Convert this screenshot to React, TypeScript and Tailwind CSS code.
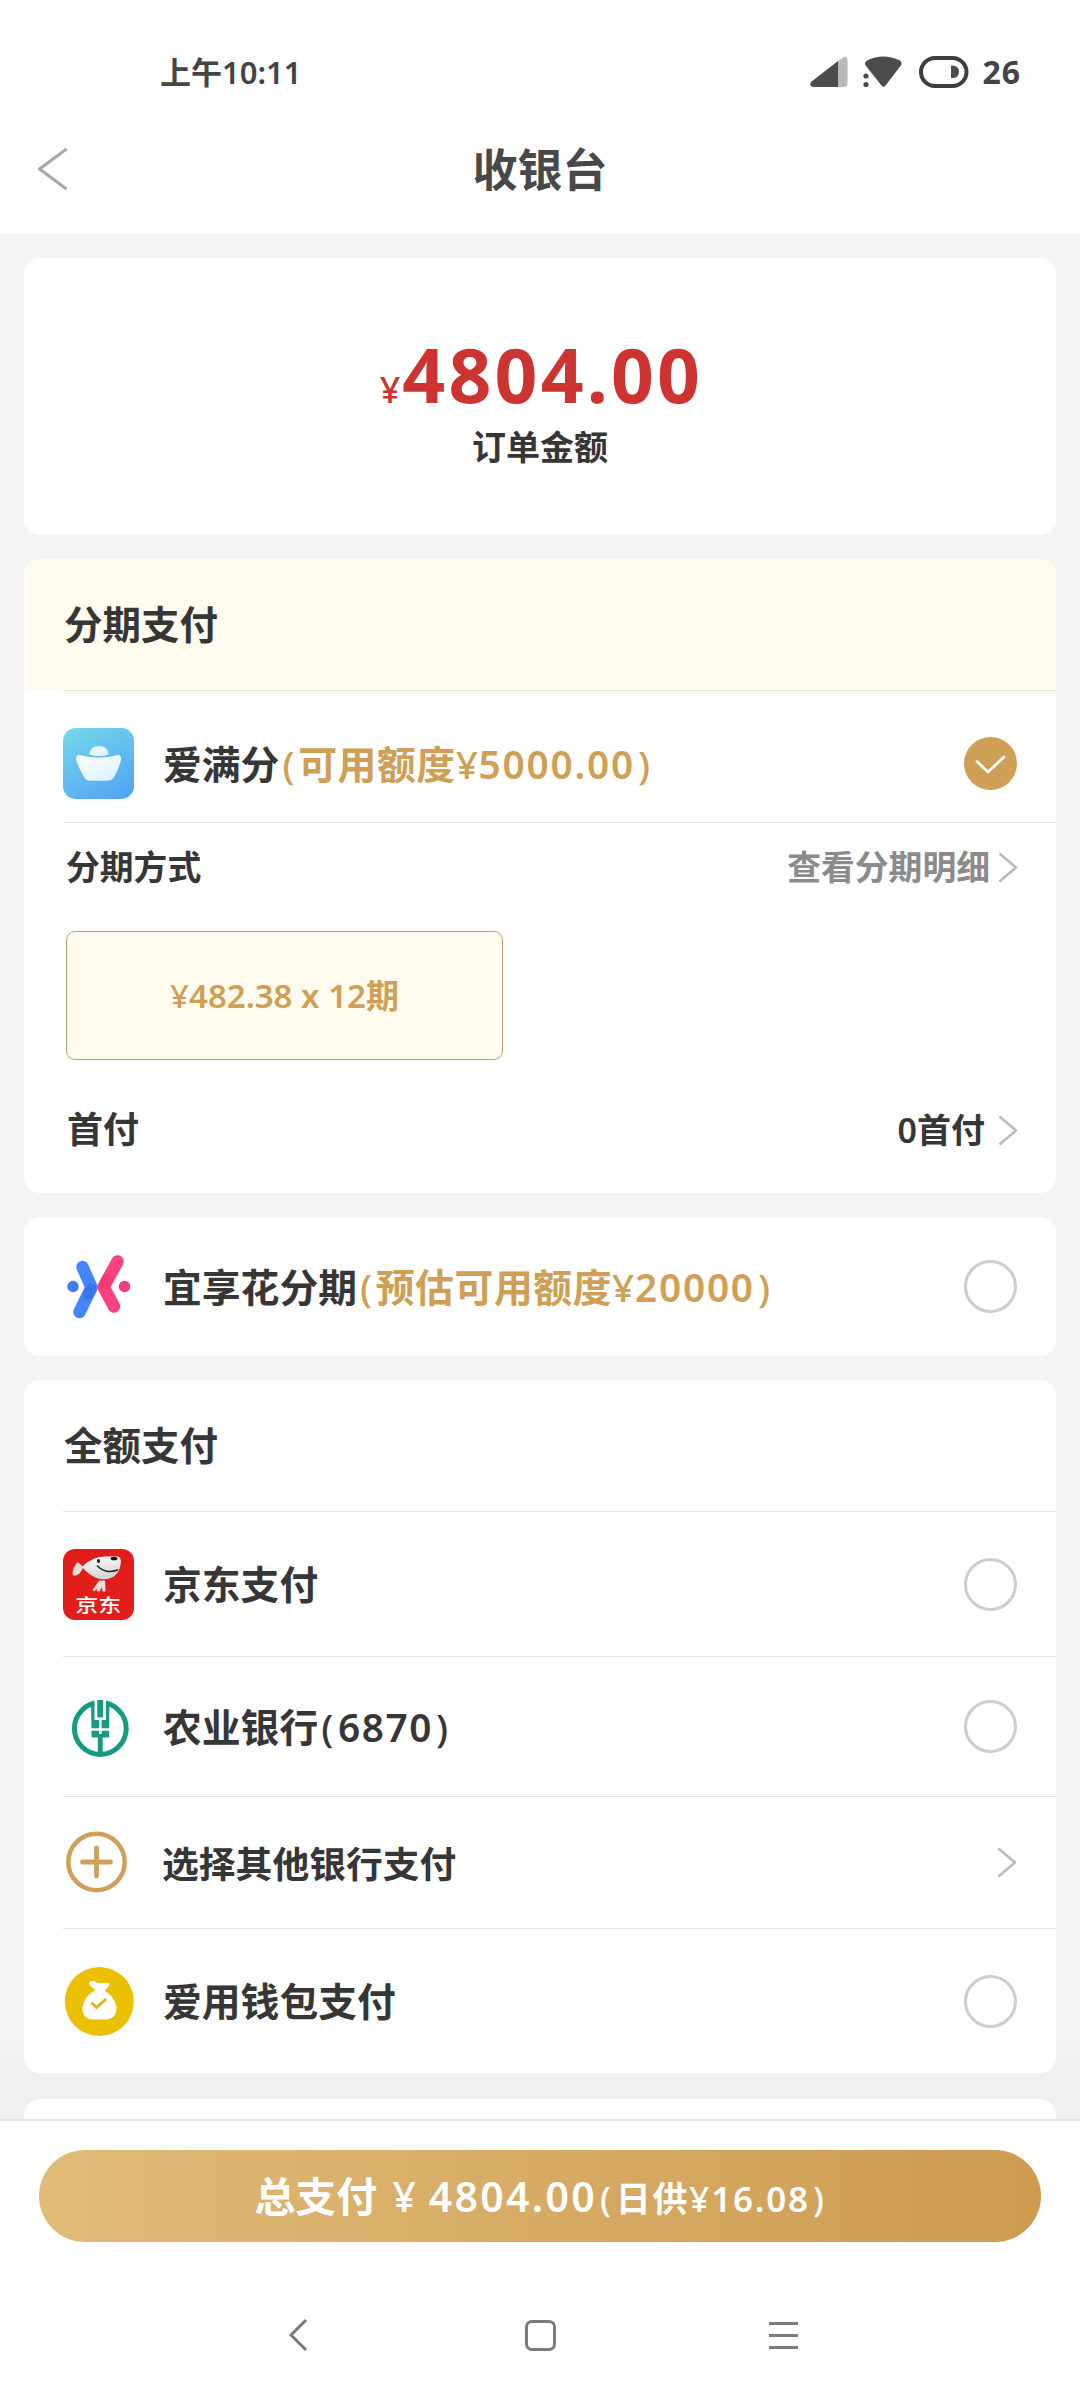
import type { ReactNode } from "react";

function Chevron() {
  return (
    <svg width="20" height="31" viewBox="0 0 20 31" fill="none" className="shrink-0">
      <path d="M1.500 1.500 L18 15.500 L1.500 29.500" stroke="#bababa" strokeWidth="2.500" strokeLinejoin="round" />
    </svg>
  );
}

function Radio({ checked = false }: { checked?: boolean }) {
  if (checked) {
    return (
      <svg width="53" height="53" viewBox="0 0 53 53" fill="none" className="shrink-0">
        <circle cx="26.500" cy="26.500" r="26.500" fill="#cf9f55" />
        <path d="M13 24.500 L24 35 L40 20" stroke="#fff" strokeWidth="2.800" strokeLinecap="round" strokeLinejoin="round" />
      </svg>
    );
  }
  return <div className="size-[53px] shrink-0 rounded-full border-[3px] border-[#cdcdcd]" />;
}

function Divider() {
  return <div className="ml-[39px] h-px bg-[#e3e3e0]" />;
}

function Yen() {
  return <span className="font-medium">¥</span>;
}

// Brackets sit a little away from their content
function Paren({ children }: { children: ReactNode }) {
  return (
    <>
      <span className="mr-[3px] ml-[3px] font-medium">(</span>
      {children}
      <span className="ml-[3px] font-medium">)</span>
    </>
  );
}

function IngotIcon() {
  return (
    <svg width="71" height="71" viewBox="0 0 71 71">
      <defs>
        <linearGradient id="sky" x1="0.2" y1="0" x2="0.8" y2="1">
          <stop offset="0" stopColor="#72d5e8" />
          <stop offset="1" stopColor="#51a6f5" />
        </linearGradient>
        <linearGradient id="ingot" x1="0" y1="0" x2="1" y2="1">
          <stop offset="0" stopColor="#fff" />
          <stop offset="1" stopColor="#d9f0fd" />
        </linearGradient>
      </defs>
      <rect width="71" height="71" rx="13" fill="url(#sky)" />
      <path d="M26.500 26.500 Q27 18 36 18 Q45 18 45.500 26.500 Q36 29.500 26.500 26.500Z" fill="#e4f6fc" />
      <path
        d="M16 27 Q36 32.500 55 27 Q58.500 27 58 32 Q56 41 51 49 Q49 52.800 44 52.800 H27.500 Q23 52.800 21 49 Q15.500 40 13.200 31.500 Q12.700 27 16 27Z"
        fill="url(#ingot)"
      />
    </svg>
  );
}

function YixiangIcon() {
  return (
    <svg width="71" height="71" viewBox="0 0 71 71" fill="none">
      <g strokeLinecap="round" strokeLinejoin="round">
        <path d="M19.500 16 L28.500 36.500 L16.500 61" stroke="#4486fa" strokeWidth="12.500" />
        <path d="M28 38 L25.500 43" stroke="#3876e8" strokeWidth="11" />
        <path d="M54.500 10.500 L40.500 36 L51 55.500" stroke="#fc427f" strokeWidth="12.500" />
        <path d="M42 33 L44.500 28" stroke="#ef3a7b" strokeWidth="11" />
      </g>
      <circle cx="10" cy="35.500" r="5.700" fill="#3f7df0" />
      <circle cx="61.500" cy="35.500" r="5.700" fill="#f13c7b" />
    </svg>
  );
}

function JdIcon() {
  return (
    <svg width="71" height="71" viewBox="0 0 71 71">
      <defs>
        <linearGradient id="joy" x1="0" y1="0" x2="0.300" y2="1">
          <stop offset="0" stopColor="#fff" />
          <stop offset="1" stopColor="#d5d5d5" />
        </linearGradient>
      </defs>
      <rect width="71" height="71" rx="12" fill="#e31d1a" />
      <path d="M20 18 Q15 12 13.500 14 Q9.500 20 9.500 25 Q10 27.500 13 26.500 Q17 25 19.500 20Z" fill="#dedede" />
      <path d="M19 18 Q28 8 42 7.500 L55 7.500 Q59 9 57.500 16 Q56 24 50 28 Q43 31.500 35 29.500 Q26 26.500 19 18Z" fill="url(#joy)" />
      <path d="M34.500 17 Q43 25.500 54.500 21" fill="none" stroke="#222" strokeWidth="1.500" strokeLinecap="round" />
      <ellipse cx="35.500" cy="12" rx="1.600" ry="1.900" fill="#222" />
      <ellipse cx="51" cy="9.500" rx="3.500" ry="1.800" fill="#111" />
      <path d="M36 31.500 L42 31.500 L42.500 42.500 L39.500 42.500 L38.800 38 L36.500 42.500 L33.500 42 L34.500 39.500 L31 42.500 L29.500 41Z" fill="#f4dcdc" />
      <text
        x="35.300"
        y="78.500"
        transform="scale(1 0.8)"
        textAnchor="middle"
        fontSize="23"
        fill="#fff"
        fontFamily="'Noto Sans CJK SC', sans-serif"
        fontWeight="500"
      >
        京东
      </text>
    </svg>
  );
}

function AbcIcon() {
  return (
    <svg width="71" height="71" viewBox="0 0 71 71" fill="none">
      <circle cx="37.300" cy="37.500" r="25.900" stroke="#179a80" strokeWidth="5" />
      <path d="M31.400 6 H43 V20 H31.400Z" fill="#fff" />
      <g fill="#179a80">
        <path d="M28 11 H31.500 V29 H36 V37.300 H28.500Z" />
        <path d="M46.500 11 H43 V29 H38.600 V37.300 H46Z" />
        <path d="M34.300 9 H40.200 V26.500 H34.300Z" />
        <path d="M28.500 39.800 H36 V43 H38.600 V39.800 H46 V46.500 H39.700 V63 H34.800 V46.500 H28.500Z" />
      </g>
    </svg>
  );
}

function PlusIcon() {
  return (
    <svg width="71" height="71" viewBox="0 0 71 71" fill="none" stroke="#cfa05a" strokeLinecap="round">
      <circle cx="33.500" cy="35" r="28.200" strokeWidth="4.500" />
      <path d="M19.500 35 H47.500 M33.500 21 V49" strokeWidth="4.800" />
    </svg>
  );
}

function WalletIcon() {
  return (
    <svg width="71" height="71" viewBox="0 0 71 71">
      <circle cx="36.300" cy="35.500" r="34.500" fill="#ebbf02" />
      <path
        d="M26 16.500 Q29.500 14 33 16 Q36.500 18 40 17 Q44 16.500 47 17.500 Q45 22 41.500 24.500 Q52 31 53.500 41 Q54 53 42 53.500 H30.500 Q18.500 53 19.500 41 Q21 31 31.500 24.500 L32 23 Q26.500 20.500 26 16.500Z"
        fill="#fff"
      />
      <path d="M28.500 36.500 L33.500 41.500 L43 33" fill="none" stroke="#dfb21a" strokeWidth="2.800" />
    </svg>
  );
}

type PayRowProps = {
  icon: ReactNode;
  className: string;
  right: ReactNode;
  children: ReactNode;
};

function PayRow({ icon, className, right, children }: PayRowProps) {
  return (
    <div className={`flex items-center pl-[39px] pr-[39px] ${className}`}>
      {icon}
      <div className="ml-[29px] flex-1 pt-px whitespace-nowrap text-[38.8px] leading-none">{children}</div>
      {right}
    </div>
  );
}

function StatusBar() {
  return (
    <div className="flex h-[144px] items-center justify-between pl-[160px] pr-[59px] text-[#444]">
      <span className="text-[31px] leading-none">上午10:11</span>
      <div className="flex items-center">
        <svg width="38" height="32" viewBox="0 0 38 32">
          <path d="M28 5 L34 1 Q37.500 0 37.500 4 V27 Q37.500 31 34 31 H28Z" fill="#b9b9b9" />
          <path d="M28 5 V31 H3 Q-1 30 1 26Z" fill="#4c4c4c" />
        </svg>
        <svg width="40" height="32" viewBox="0 0 40 32" className="ml-[15px]" fill="#4c4c4c">
          <path d="M3 10 Q0.500 7 4 4.500 Q20 -3.500 37 4.500 Q40 7 37.500 10 L22.500 29.500 Q20.500 32 18.500 29.500Z" />
          <circle cx="3" cy="20" r="2.600" />
          <circle cx="3" cy="28.500" r="2.600" />
        </svg>
        <svg width="50" height="32" viewBox="0 0 50 32" className="ml-[16px]" fill="none">
          <rect x="2" y="2" width="45.500" height="28" rx="14" stroke="#3e3e3e" strokeWidth="4" />
          <path d="M32 9.500 H34 Q40 10.500 40 15.700 Q40 21.500 34 22 H32Z" fill="#4c4c4c" />
        </svg>
        <span className="ml-[13px] text-[32px] leading-none font-bold tracking-[1px]">26</span>
      </div>
    </div>
  );
}

export default function App() {
  return (
    <div className="flex h-[2400px] w-[1080px] flex-col overflow-hidden bg-[#f4f4f4] font-['Noto_Sans','Noto_Sans_CJK_SC',sans-serif] font-semibold text-[#363636]">
      <header className="h-[234px] shrink-0 bg-[#fefefe]">
        <StatusBar />
        <div className="flex h-[50px] items-center justify-between px-[37px]">
          <svg width="31" height="44" viewBox="0 0 31 44" fill="none">
            <path d="M29.500 2 L2.500 22 L29.500 42" stroke="#a8a8a8" strokeWidth="2.900" strokeLinejoin="round" />
          </svg>
          <h1 className="text-[45px] leading-none font-bold text-[#484848]">收银台</h1>
          <div className="w-[31px]" />
        </div>
      </header>

      <main className="flex h-[1885px] shrink-0 flex-col overflow-hidden bg-linear-to-b from-[#f4f4f4] from-95% to-[#f0f0f0] to-98% px-6 pt-6">
        <section className="flex h-[277px] shrink-0 flex-col items-center rounded-[16px] bg-white pt-[79px]">
          <div className="flex items-baseline pl-[3px] leading-none text-[#cd3431]">
            <span className="mr-[2px] text-[36px] leading-none font-medium">¥</span>
            <span className="text-[75px] leading-[75px] font-bold tracking-[3.2px]">4804.00</span>
          </div>
          <div className="mt-[18px] text-[34px] leading-none">订单金额</div>
        </section>

        <section className="mt-6 h-[634px] shrink-0 overflow-hidden rounded-[16px] bg-white">
          <div className="flex h-[131px] items-center bg-[#fffbef] pl-[40px] text-[38.5px]">分期支付</div>
          <Divider />
          <PayRow className="h-[131px] pt-[14px]" icon={<IngotIcon />} right={<Radio checked />}>
            爱满分
            <span className="tracking-[0.6px] text-[#cf9f55]">
              <Paren>
                可用额度
                <Yen />
                <span className="tracking-[1.8px]">5000.00</span>
              </Paren>
            </span>
          </PayRow>
          <Divider />
          <div className="flex h-[89px] items-center justify-between pr-[38px] pl-[42px] text-[33.8px] leading-none">
            <span>分期方式</span>
            <div className="flex items-center gap-2 text-[#8b8b8b]">
              查看分期明细
              <Chevron />
            </div>
          </div>
          <div className="mt-[19px] ml-[42px] flex h-[129px] w-[437px] items-center justify-center rounded-[9px] border border-[#bfa377] bg-[#fffbef] text-[33px] leading-none text-[#cf9f55]">
            <span>
              <Yen />
              482.38 x 12期
            </span>
          </div>
          <div className="mt-[32px] flex h-[76px] items-center justify-between pr-[38px] pl-[43px] leading-none">
            <span className="text-[36px]">首付</span>
            <div className="flex items-center gap-[13px] text-[34px]">
              0首付
              <Chevron />
            </div>
          </div>
        </section>

        <section className="mt-6 h-[139px] shrink-0 rounded-[16px] bg-white">
          <PayRow className="h-[139px]" icon={<YixiangIcon />} right={<Radio />}>
            宜享花分期
            <span className="tracking-[0.6px] text-[#cf9f55]">
              <Paren>
                预估可用额度
                <Yen />
                <span className="tracking-[1.8px]">20000</span>
              </Paren>
            </span>
          </PayRow>
        </section>

        <section className="mt-6 h-[693px] shrink-0 rounded-[16px] bg-white">
          <div className="flex h-[131px] items-center pl-[40px] text-[38.5px]">全额支付</div>
          <Divider />
          <PayRow className="h-[144px]" icon={<JdIcon />} right={<Radio />}>
            京东支付
          </PayRow>
          <Divider />
          <PayRow className="h-[139px]" icon={<AbcIcon />} right={<Radio />}>
            农业银行
            <span className="tracking-[1.6px]">
              <Paren>6870</Paren>
            </span>
          </PayRow>
          <Divider />
          <PayRow className="h-[131px]" icon={<PlusIcon />} right={<Chevron />}>
            <span className="-ml-px text-[36.8px]">选择其他银行支付</span>
          </PayRow>
          <Divider />
          <PayRow className="h-[144px]" icon={<WalletIcon />} right={<Radio />}>
            爱用钱包支付
          </PayRow>
        </section>

        <section className="mt-[26px] h-[60px] shrink-0 rounded-t-[16px] bg-white" />
      </main>

      <footer className="flex h-[281px] shrink-0 flex-col items-center border-t-2 border-[#e4e4e4] bg-[#fefefe] pt-[29px]">
        <button className="flex h-[92px] w-[1002px] items-baseline justify-center rounded-full bg-linear-to-r from-[#e0bb78] to-[#cd9b50] text-[41px] leading-[92px] whitespace-pre text-white">
          总支付<span className="mr-[13px] ml-[15px] font-medium">¥</span>
          <span className="tracking-[2.3px]">4804.00</span>
          <span className="text-[35px] leading-[90px] tracking-[1.8px]">
            <Paren>
              日供
              <Yen />
              16.08
            </Paren>
          </span>
        </button>
        <div className="mt-[76px] flex h-[34px] w-full items-center pl-[287px]">
          <svg width="22" height="34" viewBox="0 0 22 34" fill="none">
            <path d="M19 2 L4 17 L19 32" stroke="#7b7b7b" strokeWidth="3" />
          </svg>
          <div className="ml-[216px] h-[31px] w-[31px] rounded-[7px] border-[3px] border-[#7b7b7b]" />
          <div className="ml-[213px] flex w-[29px] flex-col gap-[9px]">
            <div className="h-[3px] bg-[#7b7b7b]" />
            <div className="h-[3px] bg-[#7b7b7b]" />
            <div className="h-[3px] bg-[#7b7b7b]" />
          </div>
        </div>
      </footer>
    </div>
  );
}
